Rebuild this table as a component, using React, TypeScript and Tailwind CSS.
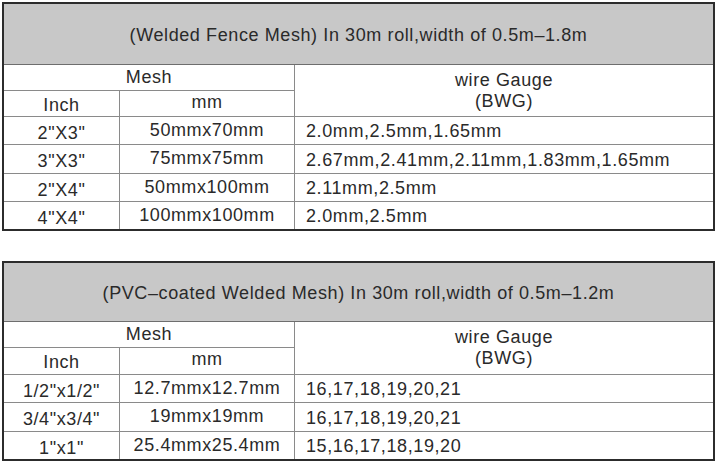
const fence = {
  title: '(Welded Fence Mesh) In 30m roll,width of 0.5m\u20131.8m',
  rows: [
    ['2"X3"', '50mmx70mm', '2.0mm,2.5mm,1.65mm'],
    ['3"X3"', '75mmx75mm', '2.67mm,2.41mm,2.11mm,1.83mm,1.65mm'],
    ['2"X4"', '50mmx100mm', '2.11mm,2.5mm'],
    ['4"X4"', '100mmx100mm', '2.0mm,2.5mm'],
  ],
  heights: ['h-[28px]', 'h-[29px]', 'h-[28px]', 'h-[27px]'],
};

const pvc = {
  title: '(PVC\u2013coated Welded Mesh) In 30m roll,width of 0.5m\u20131.2m',
  rows: [
    ['1/2"x1/2"', '12.7mmx12.7mm', '16,17,18,19,20,21'],
    ['3/4"x3/4"', '19mmx19mm', '16,17,18,19,20,21'],
    ['1"x1"', '25.4mmx25.4mm', '15,16,17,18,19,20'],
  ],
  heights: ['h-[28px]', 'h-[29px]', 'h-[27px]'],
};

type Spec = typeof fence;

const SpecTable = ({ spec, headH, inchH }: { spec: Spec; headH: string; inchH: string }) => {
  const last = spec.rows.length - 1;
  return (
    <div className="ml-[2px] w-[713px] border-2 border-[#2c2c2c] bg-white">
      <div className={`flex items-center justify-center border-b border-[#6e6e6e] bg-[#c8c8c8] pt-[3px] ${headH}`}>
        {spec.title}
      </div>
      <div className="flex">
        <div className="w-[291px] shrink-0">
          <div className="flex h-[26px] items-start justify-center border-r border-b border-[#8a8a8a] leading-[25px]">Mesh</div>
          <div className={`flex ${inchH}`}>
            <div className="flex w-[116px] items-center justify-center border-r border-b border-[#8a8a8a] pt-[3px]">Inch</div>
            <div className="flex w-[175px] items-start justify-center border-r border-b border-[#8a8a8a] leading-[22px]">mm</div>
          </div>
        </div>
        <div className="flex flex-1 flex-col items-center justify-center border-b border-[#8a8a8a] leading-[21px]">
          <span>wire Gauge</span>
          <span>(BWG)</span>
        </div>
      </div>
      {spec.rows.map((r, i) => (
        <div key={r[0]} className={`flex ${spec.heights[i]} ${i < last ? 'border-b border-[#8a8a8a]' : ''}`}>
          <div className="flex w-[116px] items-center justify-center border-r border-[#8a8a8a] pt-[5px]">{r[0]}</div>
          <div className="flex w-[175px] items-center justify-center border-r border-[#8a8a8a] pb-[1px]">{r[1]}</div>
          <div className="flex flex-1 items-center pl-[11px] pt-[2px]">{r[2]}</div>
        </div>
      ))}
    </div>
  );
};

export default function App() {
  return (
    <div
      className="h-[464px] w-[716px] bg-white pt-[2px] text-[18px] tracking-[0.6px] text-[#2a2a2a]"
      style={{ fontFamily: '"Liberation Sans", Arial, sans-serif' }}
    >
      <SpecTable spec={fence} headH="h-[61px]" inchH="h-[26px]" />
      <div className="mt-[30px]">
        <SpecTable spec={pvc} headH="h-[59px]" inchH="h-[27px]" />
      </div>
    </div>
  );
}
